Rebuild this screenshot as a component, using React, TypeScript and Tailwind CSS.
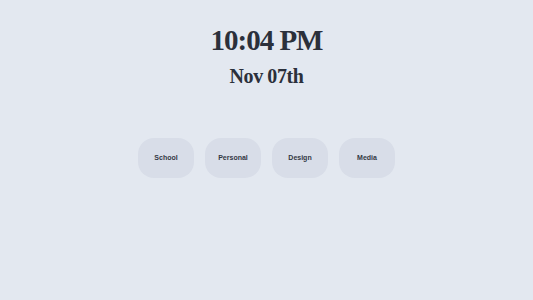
export default function App() {
  const links = ['School', 'Personal', 'Design', 'Media']

  return (
    <div className="min-h-screen w-full bg-[#e3e8f0] flex flex-col items-center">
      {/* Clock */}
      <div className="mt-[24px] flex flex-col items-center text-[#2b303b] font-['Liberation_Serif',serif] font-bold">
        <h1 className="text-[29px] leading-[32px] tracking-[-1px]">10:04 PM</h1>
        <h2 className="mt-[9px] text-[20px] leading-[22px] tracking-[-0.4px]">Nov 07th</h2>
      </div>

      {/* Quick links */}
      <div className="mt-[51px] flex gap-[11px]">
        {links.map((link) => (
          <button
            key={link}
            className="h-[40px] w-[56px] rounded-[16px] bg-[#d8dde8] text-[7px] font-semibold text-[#333844] font-['Liberation_Sans',sans-serif]"
          >
            {link}
          </button>
        ))}
      </div>
    </div>
  )
}
